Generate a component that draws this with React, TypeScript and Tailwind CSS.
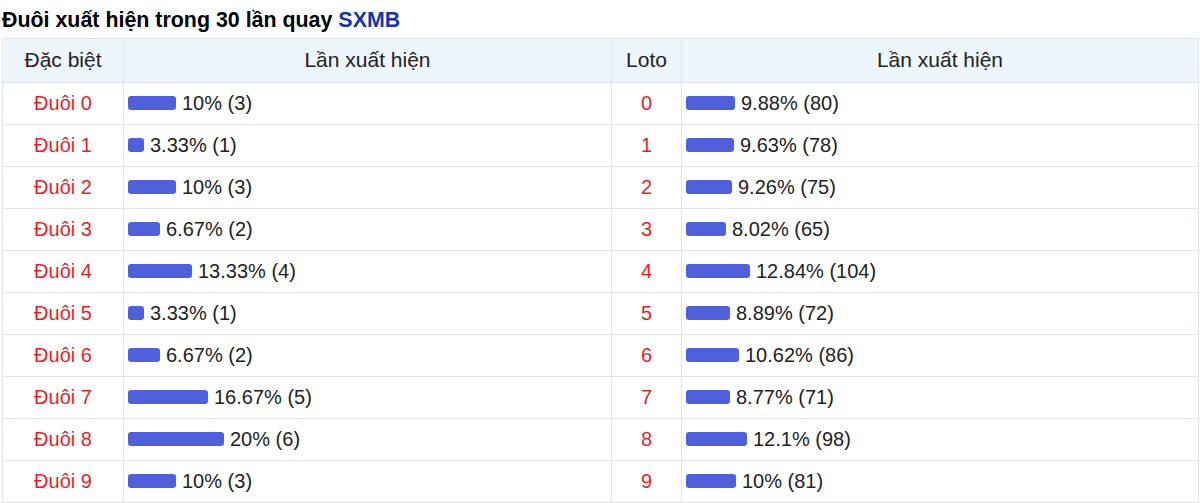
const special = [
  { label: "Đuôi 0", pct: 10, count: 3 },
  { label: "Đuôi 1", pct: 3.33, count: 1 },
  { label: "Đuôi 2", pct: 10, count: 3 },
  { label: "Đuôi 3", pct: 6.67, count: 2 },
  { label: "Đuôi 4", pct: 13.33, count: 4 },
  { label: "Đuôi 5", pct: 3.33, count: 1 },
  { label: "Đuôi 6", pct: 6.67, count: 2 },
  { label: "Đuôi 7", pct: 16.67, count: 5 },
  { label: "Đuôi 8", pct: 20, count: 6 },
  { label: "Đuôi 9", pct: 10, count: 3 },
];

const loto = [
  { pct: 9.88, count: 80 },
  { pct: 9.63, count: 78 },
  { pct: 9.26, count: 75 },
  { pct: 8.02, count: 65 },
  { pct: 12.84, count: 104 },
  { pct: 8.89, count: 72 },
  { pct: 10.62, count: 86 },
  { pct: 8.77, count: 71 },
  { pct: 12.1, count: 98 },
  { pct: 10, count: 81 },
];

const Bar = ({ pct, count, scale }: { pct: number; count: number; scale: number }) => (
  <div className="flex items-center">
    <span
      className="inline-block h-[14px] rounded-[3px] bg-[#505fdb]"
      style={{ width: Math.round(pct * scale) }}
    />
    <span className="ml-[6px]">
      {pct}% ({count})
    </span>
  </div>
);

const App = () => {
  return (
    <div className="w-[1200px] h-[503px] bg-white text-[#222] font-['Liberation_Sans',Arial,sans-serif] overflow-hidden">
      <h2 className="h-[38px] pl-[2px] pt-[4px] flex items-center text-[21.4px] font-bold text-black leading-none">
        Đuôi xuất hiện trong 30 lần quay&nbsp;<span className="text-[#1536ab]">SXMB</span>
      </h2>
      <table className="ml-[2px] w-[1196px] table-fixed border-collapse text-[20px] leading-none">
        <colgroup>
          <col className="w-[121px]" />
          <col className="w-[488px]" />
          <col className="w-[70px]" />
          <col className="w-[517px]" />
        </colgroup>
        <thead>
          <tr className="h-[44px] bg-[#eef6fd] text-[21px]">
            <th className="border border-[#e1e4e8] pb-[2px] font-normal text-center">Đặc biệt</th>
            <th className="border border-[#e1e4e8] pb-[2px] font-normal text-center">Lần xuất hiện</th>
            <th className="border border-[#e1e4e8] pb-[2px] font-normal text-center">Loto</th>
            <th className="border border-[#e1e4e8] pb-[2px] font-normal text-center">Lần xuất hiện</th>
          </tr>
        </thead>
        <tbody>
          {special.map((s, i) => (
            <tr key={s.label} className="h-[42px]">
              <td className="border border-[#e1e4e8] pb-[2px] text-center text-[#ed1c24]">{s.label}</td>
              <td className="border border-[#e1e4e8] pb-[2px] pl-[4px]">
                <Bar pct={s.pct} count={s.count} scale={4.8} />
              </td>
              <td className="border border-[#e1e4e8] pb-[2px] text-center text-[#ed1c24]">{i}</td>
              <td className="border border-[#e1e4e8] pb-[2px] pl-[4px]">
                <Bar pct={loto[i].pct} count={loto[i].count} scale={5} />
              </td>
            </tr>
          ))}
        </tbody>
      </table>
    </div>
  );
};

export default App;
